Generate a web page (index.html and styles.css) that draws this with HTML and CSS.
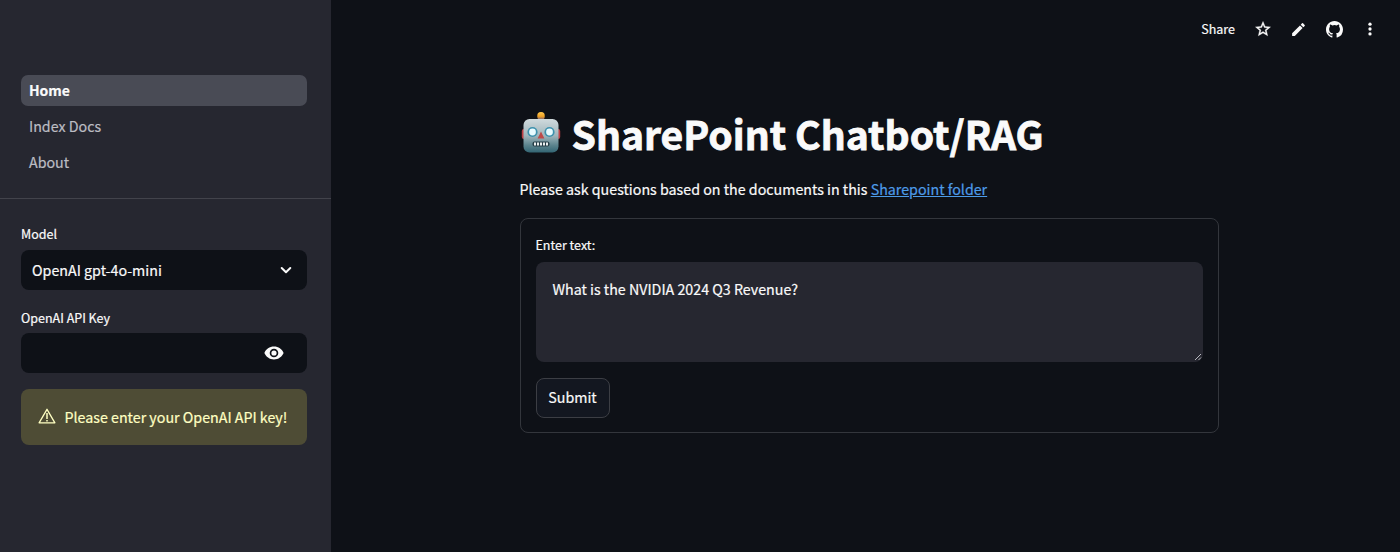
FILE: index.html
```html
<!DOCTYPE html>
<html lang="en">
<head>
<meta charset="utf-8">
<title>SharePoint Chatbot/RAG</title>
<link rel="stylesheet" href="styles.css">
</head>
<body>
<div class="app">
  <aside class="sidebar">
    <nav class="nav">
      <a class="nav-item active">Home</a>
      <a class="nav-item">Index Docs</a>
      <a class="nav-item">About</a>
    </nav>
    <div class="settings">
      <div class="label">Model</div>
      <div class="field">
        <span>OpenAI gpt-4o-mini</span>
        <svg class="chevron" viewBox="0 0 20 20"><path d="M5.7 8l4.3 4.2L14.3 8" fill="none" stroke="#fafafa" stroke-width="2" stroke-linecap="round" stroke-linejoin="round"/></svg>
      </div>
      <div class="label key-label">OpenAI API Key</div>
      <div class="field key-field">
        <svg class="eye" viewBox="0 0 20 14"><path fill="#fafafa" fill-rule="evenodd" d="M10 .6C5.6.6 1.9 3.200.4 7c1.500 3.800 5.200 6.400 9.600 6.400s8.100-2.600 9.600-6.400C18.100 3.200 14.400.6 10 .6zm0 10.700a4.300 4.300 0 1 1 0-8.600 4.300 4.300 0 0 1 0 8.600zm0-6.900a2.600 2.600 0 1 0 0 5.200 2.600 2.600 0 0 0 0-5.200z"/></svg>
      </div>
      <div class="warning">
        <svg class="warn-icon" viewBox="0 0 18 16"><path d="M9 1.300L16.900 14.800H1.100z" fill="none" stroke="#ffffc2" stroke-width="1.300" stroke-linejoin="round"/><path d="M9 5v6M9 11.900v1.500" stroke="#ffffc2" stroke-width="1.500"/></svg>
        <span>Please enter your OpenAI API key!</span>
      </div>
    </div>
  </aside>
  <main class="main">
    <header class="toolbar">
      <span class="share">Share</span>
      <svg class="tool" viewBox="0 0 24 24"><path fill="#fafafa" stroke="#fafafa" stroke-width=".5" d="M22 9.240l-7.190-.62L12 2 9.190 8.630 2 9.240l5.460 4.730L5.820 21 12 17.270 18.180 21l-1.630-7.030L22 9.240zM12 15.400l-3.760 2.270 1-4.280-3.320-2.880 4.380-.38L12 6.100l1.710 4.040 4.380.38-3.320 2.880 1 4.280L12 15.400z"/></svg>
      <svg class="tool pencil" viewBox="0 0 24 24"><path fill="#fafafa" d="M3 17.250V21h3.750L17.810 9.940l-3.750-3.750L3 17.250zM20.710 7.040a1 1 0 0 0 0-1.410l-2.340-2.340a1 1 0 0 0-1.410 0l-1.830 1.830 3.750 3.750 1.830-1.830z"/></svg>
      <svg class="tool github" viewBox="0 0 16 16"><path fill="#fafafa" d="M8 0C3.580 0 0 3.580 0 8c0 3.540 2.290 6.530 5.470 7.590.4.070.55-.17.55-.38 0-.19-.01-.82-.01-1.490-2.010.37-2.530-.49-2.690-.94-.09-.23-.48-.94-.82-1.130-.28-.15-.68-.52-.01-.53.63-.01 1.080.58 1.230.82.72 1.210 1.870.87 2.330.66.07-.52.28-.87.51-1.070-1.780-.2-3.640-.89-3.640-3.950 0-.87.31-1.590.82-2.150-.08-.2-.36-1.020.08-2.120 0 0 .67-.21 2.200.82a7.600 7.600 0 0 1 4 0c1.530-1.040 2.200-.82 2.200-.82.44 1.100.16 1.920.08 2.120.51.56.82 1.270.82 2.150 0 3.070-1.870 3.750-3.650 3.950.29.25.54.73.54 1.480 0 1.070-.01 1.930-.01 2.200 0 .21.15.46.55.38A8.010 8.010 0 0 0 16 8c0-4.420-3.580-8-8-8z"/></svg>
      <svg class="tool" viewBox="0 0 24 24"><g fill="#fafafa"><circle cx="12" cy="5.500" r="2.200"/><circle cx="12" cy="12" r="2.200"/><circle cx="12" cy="18.500" r="2.200"/></g></svg>
    </header>
    <section class="content">
      <h1 class="title">
        <svg class="robot" viewBox="0 0 44 44">
          <defs>
            <linearGradient id="face" x1="0" y1="0" x2="0" y2="1"><stop offset="0" stop-color="#d0dadd"/><stop offset=".5" stop-color="#9fb5bb"/><stop offset=".8" stop-color="#58818b"/><stop offset="1" stop-color="#326573"/></linearGradient>
            <linearGradient id="bulb" x1="0" y1="0" x2="0" y2="1"><stop offset="0" stop-color="#ffc84f"/><stop offset=".55" stop-color="#eda126"/><stop offset="1" stop-color="#6b557d"/></linearGradient>
          </defs>
          <rect x="2.800" y="18" width="4" height="10" rx="2" fill="#bd4045"/>
          <rect x="37.200" y="18" width="4" height="10" rx="2" fill="#bd4045"/>
          <path d="M17 10c0-3 10-3 10 0z" fill="#65636f"/>
          <rect x="18.300" y="1" width="7.400" height="8" rx="3.500" fill="url(#bulb)"/>
          <rect x="4.500" y="8" width="35" height="33.500" rx="6" fill="url(#face)"/>
          <circle cx="13.500" cy="21" r="5.100" fill="#3d91ad"/><circle cx="30.500" cy="21" r="5.100" fill="#3d91ad"/>
          <circle cx="13.500" cy="21" r="3.400" fill="#e8fbff"/><circle cx="30.500" cy="21" r="3.400" fill="#e8fbff"/>
          <path d="M22 20.500l3.400 7h-6.800z" fill="#bd4949"/>
          <rect x="13.500" y="30.500" width="17" height="5" rx="2" fill="#263f48"/>
          <path d="M15 33h14" stroke="#e8eeee" stroke-width="2.800" stroke-dasharray="2 1"/>
        </svg>
        <span>SharePoint Chatbot/RAG</span>
      </h1>
      <p class="intro">Please ask questions based on the documents in this <a class="link">Sharepoint folder</a></p>
      <div class="form">
        <div class="label form-label">Enter text:</div>
        <div class="textarea">
          <span>What is the NVIDIA 2024 Q3 Revenue?</span>
          <svg class="grip" viewBox="0 0 8 8"><path d="M1 7l6-6M4.500 7L7 4.500" stroke="#b9bac0" stroke-width="1"/></svg>
        </div>
        <div class="submit">Submit</div>
      </div>
    </section>
  </main>
</div>
</body>
</html>
```
FILE: styles.css
```css
* { box-sizing: border-box; }
body {
  margin: 0;
  background: #0e1117;
  color: #fafafa;
  font-family: "Noto Sans CJK SC", "Noto Sans", sans-serif;
  font-size: 14.250px;
  line-height: 24px;
  -webkit-text-stroke: .2px;
}
svg { display: block; flex: none; }
span { white-space: nowrap; }
.app { display: flex; height: 552px; overflow: hidden; }
.sidebar { width: 331px; flex: none; background: #262730; }
.nav {
  display: flex;
  flex-direction: column;
  gap: 4px;
  height: 198.500px;
  padding: 74.500px 24px 0 21px;
  border-bottom: 1.500px solid #42434b;
}
.nav-item {
  height: 31.700px;
  padding-left: 8px;
  border-radius: 7px;
  line-height: 31.500px;
  color: #bcbdc3;
}
.nav-item.active { background: #494b55; color: #fafafa; font-size: 14px; font-weight: 700; line-height: 30px; }
.settings { padding: 24px 24px 0 21px; }
.label { height: 23px; font-size: 12.500px; line-height: 21px; }
.field {
  display: flex;
  align-items: center;
  justify-content: space-between;
  height: 40px;
  margin-top: 4.500px;
  padding: 0 11px;
  border-radius: 8px;
  background: #0e1117;
}
.chevron { width: 20px; height: 20px; }
.key-label { margin-top: 16px; line-height: 24px; }
.key-field { justify-content: flex-end; padding-right: 23px; margin-top: 4px; }
.eye { width: 20px; height: 14px; }
.warning {
  display: flex;
  align-items: center;
  height: 56px;
  margin-top: 16px;
  padding-left: 16.500px;
  gap: 9px;
  border-radius: 8px;
  background: #4e4c35;
  color: #ffffc2;
}
.warn-icon { width: 18px; height: 16px; margin-top: -3px; }
.main { flex: 1; }
.toolbar {
  display: flex;
  align-items: center;
  justify-content: flex-end;
  gap: 18px;
  height: 58px;
  padding-right: 21px;
}
.share { margin-right: 1px; font-size: 12.500px; }
.tool { width: 18px; height: 18px; }
.pencil { width: 17px; height: 17px; margin-right: 1px; }
.github { width: 17px; height: 17px; }
.content { width: 699.500px; margin: 50px 0 0 188.500px; }
.title {
  display: flex;
  align-items: center;
  gap: 9px;
  height: 50px;
  margin: 0 0 0 -1px;
  font-size: 39.100px;
  font-weight: 700;
  line-height: 50px;
  -webkit-text-stroke: .8px;
}
.robot { width: 44px; height: 44px; }
.intro { margin: 19px 0 0; }
.link { color: #4d9be8; text-decoration: underline; }
.form {
  height: 215px;
  margin-top: 17px;
  padding: 15px;
  border: 1px solid #33363c;
  border-radius: 8px;
}
.textarea {
  position: relative;
  height: 100px;
  margin-top: 5px;
  padding: 15px 17px;
  border-radius: 8px;
  background: #262730;
}
.grip { position: absolute; right: 1px; bottom: 1px; width: 8px; height: 8px; }
.submit {
  width: 74px;
  height: 40px;
  margin-top: 16px;
  border: 1px solid #3c3e44;
  border-radius: 8px;
  background: #131720;
  line-height: 36px;
  text-align: center;
}
```
